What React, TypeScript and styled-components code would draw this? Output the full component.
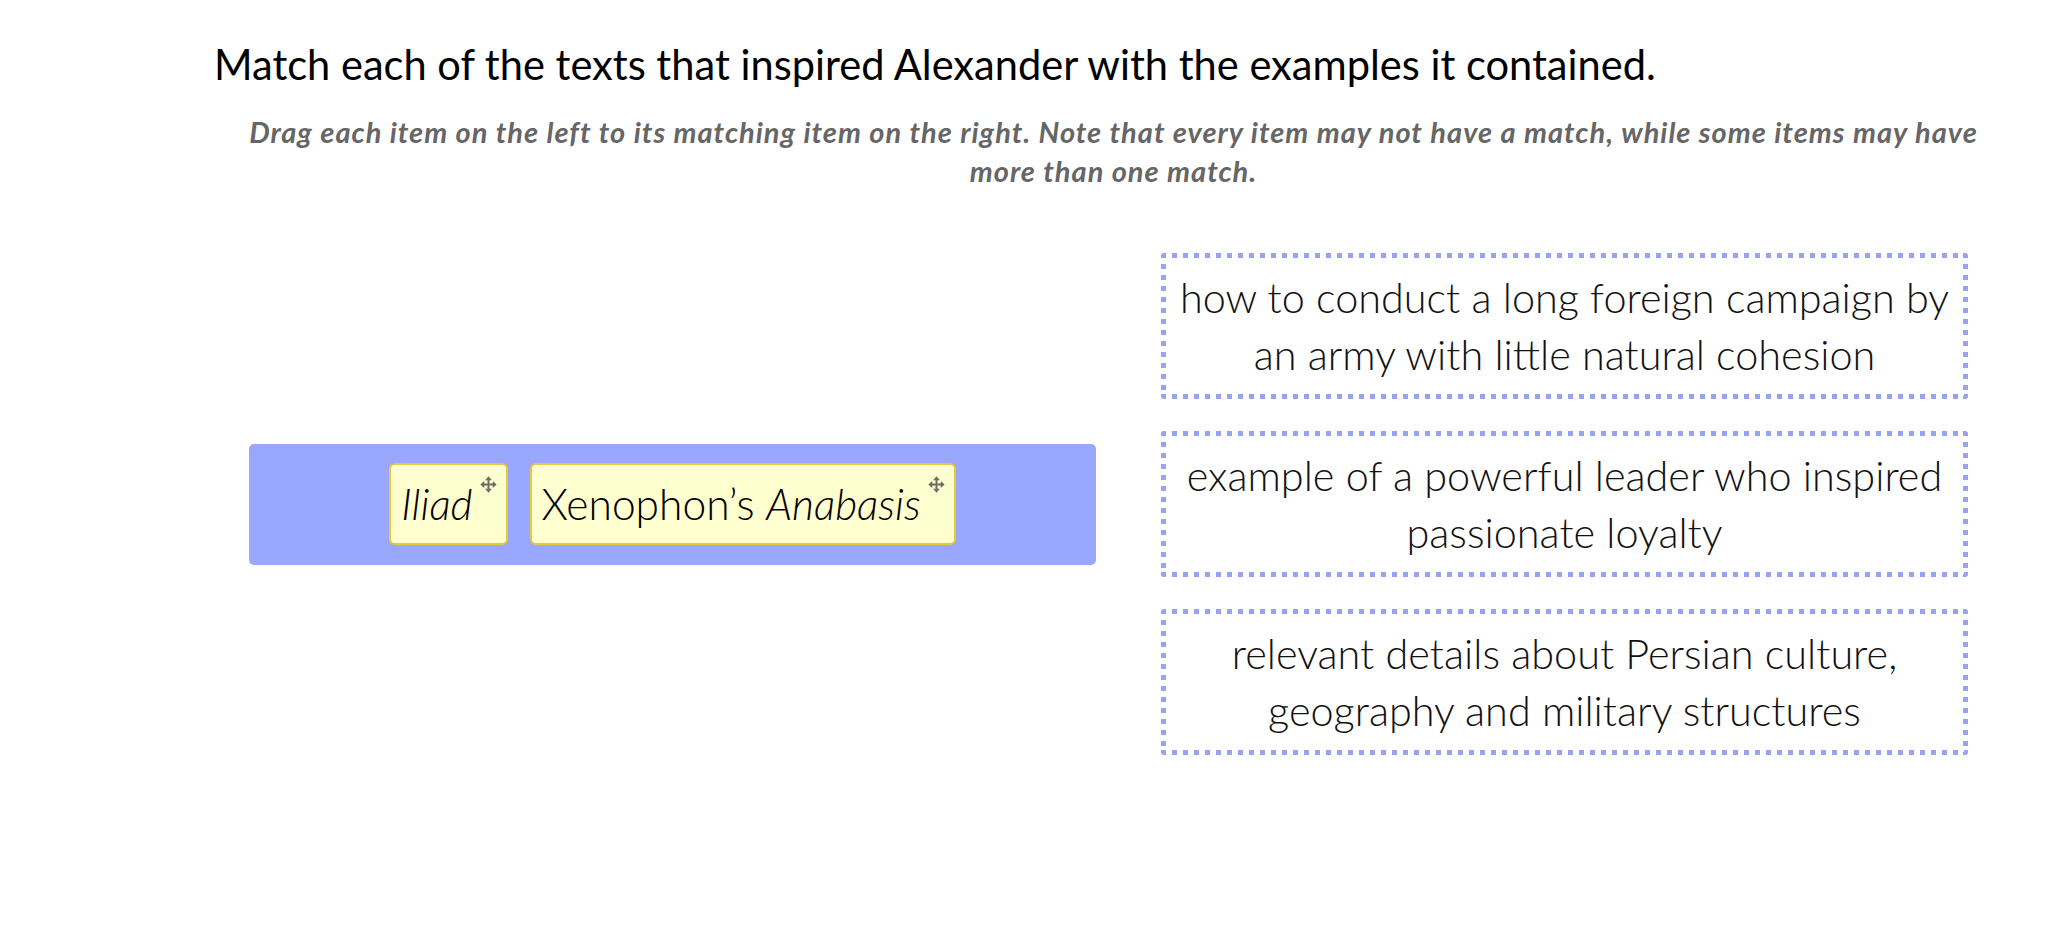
import React from "react";
import styled, { createGlobalStyle } from "styled-components";

const GlobalStyle = createGlobalStyle`
  html, body {
    margin: 0;
    padding: 0;
    background: #ffffff;
  }
  body {
    font-family: "Lato", "Liberation Sans", sans-serif;
    color: #000;
  }
`;

const Page = styled.div`
  width: 2048px;
  box-sizing: border-box;
  padding: 0 72px 0 214px;
`;

const Title = styled.h1`
  margin: 0;
  padding-top: 40px;
  font-family: "Lato", sans-serif;
  font-weight: 400;
  font-size: 41.6px;
  line-height: 48px;
  color: #000;
  white-space: nowrap;
`;

const Instructions = styled.p`
  margin: 24px -4px 0 33px;
  font-family: "Lato", sans-serif;
  font-weight: 700;
  font-style: italic;
  font-size: 29px;
  letter-spacing: 1px;
  line-height: 39px;
  color: #666666;
  text-align: center;
`;

const Board = styled.div`
  display: grid;
  grid-template-columns: 847px 807px;
  column-gap: 65px;
  align-items: center;
  margin: 63px 0 0 35px;
`;

const Tray = styled.div`
  display: flex;
  justify-content: center;
  align-items: center;
  gap: 22px;
  padding: 19.5px 20px;
  background: #99a8fc;
  border-radius: 5px;
`;

const Tile = styled.div`
  display: inline-flex;
  align-items: flex-start;
  gap: 7px;
  padding: 10px 9px 10px 10px;
  background: #ffffd0;
  border: 2px solid #e9c93c;
  border-radius: 6px;
  font-family: "Lato", sans-serif;
  font-weight: 300;
  font-size: 42.5px;
  line-height: 58px;
  color: #000;
  white-space: nowrap;
`;

const Handle = styled.span`
  display: inline-flex;
  margin-top: 1px;
  color: #6c6c60;
`;

const Targets = styled.div`
  display: flex;
  flex-direction: column;
  gap: 32px;
`;

const dot = "#97a2f3";

const Target = styled.div`
  box-sizing: border-box;
  height: 146px;
  display: flex;
  align-items: center;
  justify-content: center;
  padding: 0 14px;
  text-align: center;
  font-family: "Lato", sans-serif;
  font-weight: 300;
  font-size: 41.4px;
  line-height: 57px;
  color: #111;
  border-radius: 3px;
  background-image:
    repeating-linear-gradient(to right, ${dot} 0 5px, transparent 5px 11px),
    repeating-linear-gradient(to right, ${dot} 0 5px, transparent 5px 11px),
    repeating-linear-gradient(to bottom, ${dot} 0 5px, transparent 5px 11px),
    repeating-linear-gradient(to bottom, ${dot} 0 5px, transparent 5px 11px);
  background-size: 100% 5px, 100% 5px, 5px 100%, 5px 100%;
  background-position: left top, left bottom, left top, right top;
  background-repeat: no-repeat;
`;

const MoveIcon = () => (
  <svg width="17" height="17" viewBox="0 0 16 16" aria-hidden="true">
    <path
      d="M8 0.3 L11.2 4 H8.9 V7.1 H12 V4.8 L15.7 8 L12 11.2 V8.9 H8.9 V12 H11.2 L8 15.7 L4.8 12 H7.1 V8.9 H4 V11.2 L0.3 8 L4 4.8 V7.1 H7.1 V4 H4.8 Z"
      fill="currentColor"
    />
  </svg>
);

export default function App() {
  return (
    <>
      <GlobalStyle />
      <Page>
        <Title>Match each of the texts that inspired Alexander with the examples it contained.</Title>
        <Instructions>
          Drag each item on the left to its matching item on the right. Note that every item may not have a match, while some items may have more than one match.
        </Instructions>
        <Board>
          <Tray>
            <Tile>
              <span><i>Iliad</i></span>
              <Handle><MoveIcon /></Handle>
            </Tile>
            <Tile>
              <span>Xenophon’s <i>Anabasis</i></span>
              <Handle><MoveIcon /></Handle>
            </Tile>
          </Tray>
          <Targets>
            <Target>how to conduct a long foreign campaign by an army with little natural cohesion</Target>
            <Target>example of a powerful leader who inspired passionate loyalty</Target>
            <Target>relevant details about Persian culture, geography and military structures</Target>
          </Targets>
        </Board>
      </Page>
    </>
  );
}
